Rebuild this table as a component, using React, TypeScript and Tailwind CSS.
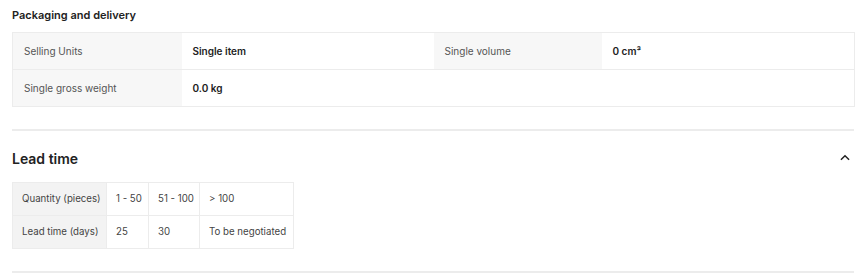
import React from 'react';

const packRows = [
  [
    { label: 'Selling Units', value: 'Single item' },
    { label: 'Single volume', value: '0 cm³' },
  ],
  [{ label: 'Single gross weight', value: '0.0 kg' }],
];

const leadRows = [
  ['Quantity (pieces)', '1 - 50', '51 - 100', '> 100'],
  ['Lead time (days)', '25', '30', 'To be negotiated'],
];

export default function App() {
  return (
    <div className="w-[865px] h-[273px] bg-white text-[#222] font-['Inter',sans-serif] overflow-hidden">
      <div className="w-[842px] ml-3">
        {/* Packaging */}
        <h3 className="pt-[7px] h-[32px] text-[11px] font-semibold leading-[16px]">Packaging and delivery</h3>
        <table className="w-[842px] table-fixed border-collapse border-[1.5px] border-[#ececec] text-[10px]">
          <colgroup>
            <col className="w-[169px]" />
            <col className="w-[252px]" />
            <col className="w-[168px]" />
            <col className="w-[253px]" />
          </colgroup>
          <tbody>
            {packRows.map((row, i) => (
              <tr key={i} className="h-[37px] border-b-[1.5px] border-[#ececec]">
                {row.map((c) => (
                  <React.Fragment key={c.label}>
                    <td className="bg-[#f7f7f7] px-[11px] text-[#555]">{c.label}</td>
                    <td className="px-[11px] font-semibold text-[#222]">{c.value}</td>
                  </React.Fragment>
                ))}
                {row.length === 1 && <td colSpan={2} />}
              </tr>
            ))}
          </tbody>
        </table>

        <div className="mt-[22px] h-[2px] bg-[#ececec]" />

        {/* Lead time */}
        <div className="flex items-center justify-between h-[51px] pt-[3px]">
          <h3 className="text-[14px] font-semibold">Lead time</h3>
          <svg width="14" height="14" viewBox="0 0 24 24" fill="none" stroke="#222" strokeWidth="2.5" className="mr-[2px]">
            <path d="M5 15l7-7 7 7" />
          </svg>
        </div>
        <table className="w-[281px] table-fixed border-collapse border-[1.5px] border-[#ececec] text-[9.7px] text-[#444] whitespace-nowrap">
          <colgroup>
            <col className="w-[94px]" />
            <col className="w-[42px]" />
            <col className="w-[51px]" />
            <col className="w-[94px]" />
          </colgroup>
          <tbody>
            {leadRows.map((r, i) => (
              <tr key={i} className="h-[33px]">
                {r.map((c, j) => (
                  <td
                    key={j}
                    className={`border-[1.5px] border-[#ececec] pl-[9px] pr-0 ${j === 0 ? 'bg-[#f3f3f3]' : ''}`}
                  >
                    {c}
                  </td>
                ))}
              </tr>
            ))}
          </tbody>
        </table>
        <div className="mt-[22px] h-[2px] bg-[#ececec]" />
      </div>
    </div>
  );
}
